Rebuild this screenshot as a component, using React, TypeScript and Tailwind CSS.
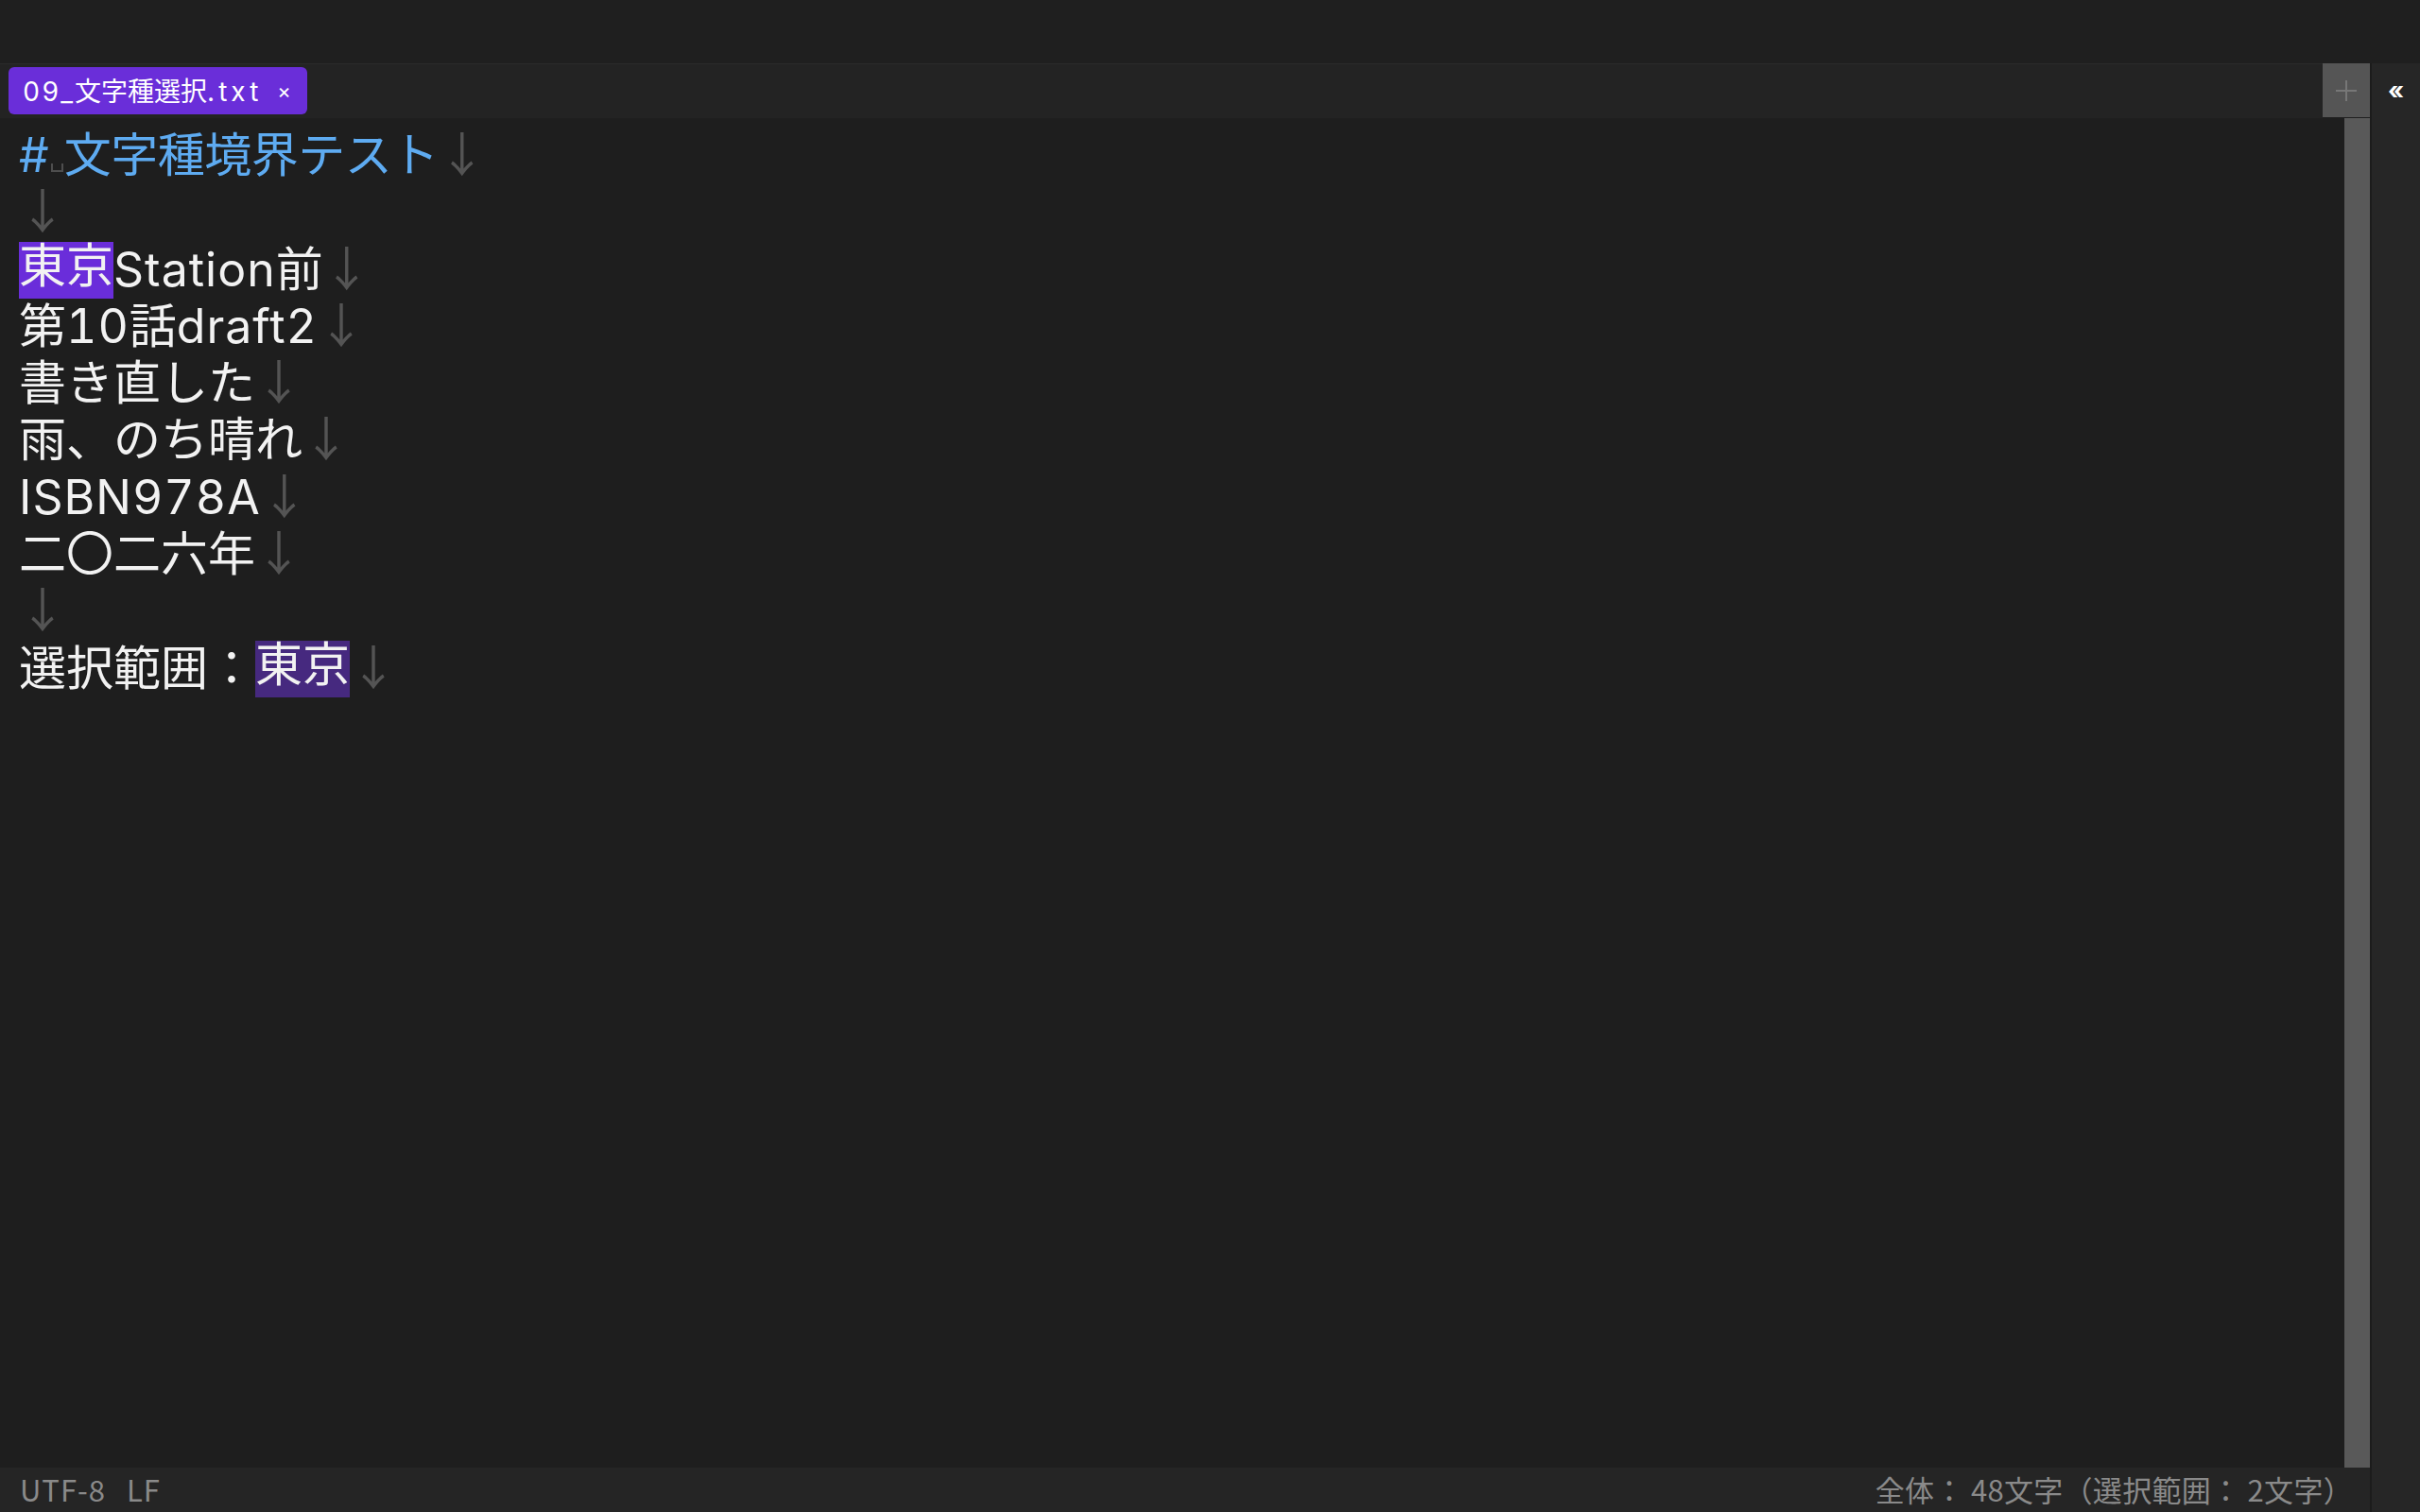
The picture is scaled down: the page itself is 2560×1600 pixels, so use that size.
import React from "react";

const cjk = '"Noto Sans CJK JP", sans-serif';
const latin = 'Inter, "Noto Sans CJK JP", sans-serif';

function Arrow() {
  return (
    <span className="text-[#545454]" style={{ fontFamily: cjk }}>
      ↓
    </span>
  );
}

// latin run, a bit wider than Inter's default
function L({ children }: { children: React.ReactNode }) {
  return <span className="tracking-[1px] tabular-nums">{children}</span>;
}

function Space() {
  // visible whitespace marker
  return <span className="inline-block w-[13px] h-[9px] ml-[2px] mr-[1px] border-x-2 border-b-2 border-[#4e4e4e]" />;
}

function Sel({ children, dim }: { children: React.ReactNode; dim?: boolean }) {
  return (
    <span
      className={
        "inline-block h-[60px] align-top relative top-[5px] " + (dim ? "bg-[#46297f]" : "bg-[#6a2dda]")
      }
    >
      <span className="relative -top-[5px]">{children}</span>
    </span>
  );
}

export default function App() {
  const lines: React.ReactNode[] = [
    <>
      <span className="text-[#5eabf1]">#</span>
      <Space />
      <span className="text-[#5eabf1] tracking-[-0.5px]">文字種境界テスト</span>
      <Arrow />
    </>,
    <Arrow />,
    <>
      <Sel>東京</Sel>
      <L>Station</L>前<Arrow />
    </>,
    <>
      第<L>10</L>話<L>draft2</L>
      <Arrow />
    </>,
    <>
      書き直した<Arrow />
    </>,
    <>
      雨、のち晴れ<Arrow />
    </>,
    <>
      <L>ISBN978A</L>
      <Arrow />
    </>,
    <>
      二〇二六年<Arrow />
    </>,
    <Arrow />,
    <>
      選択範囲：<Sel dim>東京</Sel>
      <Arrow />
    </>,
  ];

  return (
    <div
      className="w-[2560px] h-[1600px] flex flex-col bg-[#1f1f1f] overflow-hidden"
      style={{ fontFamily: latin }}
    >
      <div className="h-[67px] shrink-0" />
      <div className="flex flex-1 min-h-0">
        <div className="flex-1 flex flex-col min-w-0">
          {/* tab bar */}
          <div className="h-[58px] shrink-0 flex">
            <div className="flex-1 bg-[#232323] border-t border-[#2a2a2a] pl-[9px] pt-[3px]">
              <div className="inline-flex items-center h-[50px] w-[316px] rounded-[6px] bg-[#6a2ed9] pl-[15px] text-white">
                <span className="text-[28px] leading-none whitespace-pre">
                  <span className="tracking-[2px] tabular-nums">09_</span>
                  <span style={{ fontFamily: cjk }}>文字種選択</span>
                  <span className="tracking-[4px]">.txt</span>
                </span>
                <span className="ml-[16px] text-[22px] leading-none">×</span>
              </div>
            </div>
            <div className="w-[50px] h-[57px] bg-[#555555] flex items-center justify-center">
              <svg width="26" height="26" viewBox="0 0 26 26">
                <path d="M13 2v22M2 13h22" stroke="#777" strokeWidth="2" />
              </svg>
            </div>
          </div>

          {/* editor */}
          <div className="flex-1 flex min-h-0">
            <div className="flex-1 bg-[#1e1e1e] pt-[5px] pl-[20px] text-[50px] leading-[60.3px] text-[#f2f2f2]">
              {lines.map((l, i) => (
                <div key={i} className="h-[60.3px] whitespace-pre">
                  {l}
                </div>
              ))}
            </div>
            <div className="w-[27px] bg-[#595959]" />
          </div>

          {/* status bar */}
          <div
            className="h-[47px] shrink-0 bg-[#252525] flex items-center justify-between pl-[21px] pr-[18px] text-[31px] text-[#8a8a8a]"
            style={{ fontFamily: cjk }}
          >
            <div className="flex gap-[22px] tracking-[1px]">
              <span>UTF-8</span>
              <span>LF</span>
            </div>
            <span className="tracking-[0.3px]">全体： 48文字（選択範囲： 2文字）</span>
          </div>
        </div>

        {/* side panel */}
        <div className="w-[53px] bg-[#262626] border-l-2 border-[#1c1c1c]">
          <div className="h-[58px] flex items-center justify-center text-white text-[26px] font-bold leading-none">
            «
          </div>
        </div>
      </div>
    </div>
  );
}
